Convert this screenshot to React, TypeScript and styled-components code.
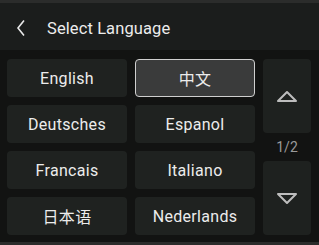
import React, {useState} from "react";
import styled, {createGlobalStyle} from "styled-components";

const GlobalStyle = createGlobalStyle`
  html, body {
    margin: 0;
    padding: 0;
    background: #121312;
  }
  body {
    font-family: Roboto, "Noto Sans CJK SC", "Noto Sans", sans-serif;
  }
`

const Screen = styled.div`
  width: 319px;
  height: 245px;
  display: flex;
  flex-direction: column;
  background: #121312;
  border-top: 3px solid #2b2c2b;
  border-bottom: 3px solid #2b2c2b;
  box-sizing: border-box;
  overflow: hidden;
`

const Header = styled.div`
  height: 47px;
  display: flex;
  align-items: center;
  padding: 3px 0 0 16px;
  background: #1b1d1c;
  color: #ececec;
  box-sizing: border-box;
`

const BackButton = styled.button`
  background: none;
  border: none;
  padding: 0;
  width: 16px;
  height: 20px;
  display: flex;
  align-items: center;
  cursor: pointer;
`

const Title = styled.h1`
  margin: 0 0 0 15px;
  font-size: 16.5px;
  font-weight: 400;
  letter-spacing: 0.1px;
  color: #ececec;
`

const Body = styled.div`
  display: grid;
  grid-template-columns: 120px 120px 48px;
  grid-template-rows: repeat(4, 38px);
  gap: 8px;
  padding: 9px 8px 0 7px;
`

const LangButton = styled.button<{ $selected: boolean }>`
  margin: 0;
  padding: 0;
  border-radius: 4px;
  border: 1px solid ${({$selected}) => $selected ? "#cfcfcf" : "transparent"};
  background: ${({$selected}) => $selected ? "#3a3b3b" : "#1f2220"};
  color: #ececec;
  font-family: Roboto, "Noto Sans CJK SC", sans-serif;
  font-size: 16px;
  letter-spacing: 0.3px;
  cursor: pointer;
`

const Pager = styled.div`
  grid-column: 3;
  grid-row: 1 / span 4;
  display: flex;
  flex-direction: column;
`

const PageButton = styled.button`
  height: 74px;
  margin: 0;
  padding: 0;
  border: none;
  border-radius: 4px;
  background: #1e211f;
  display: flex;
  align-items: center;
  justify-content: center;
  cursor: pointer;
`

const PageLabel = styled.div`
  height: 28px;
  display: flex;
  align-items: center;
  justify-content: center;
  color: #9a9a9a;
  font-size: 14px;
`

const languages = [
    "English", "中文",
    "Deutsches", "Espanol",
    "Francais", "Italiano",
    "日本语", "Nederlands",
];

function Triangle(props: { down?: boolean }) {
    return (
        <svg width="22" height="13" viewBox="0 0 22 13">
            <path
                d={props.down ? "M2 2 L20 2 L11 11 Z" : "M2 11 L20 11 L11 2 Z"}
                fill="none"
                stroke="#bdbdbd"
                strokeWidth="2"
                strokeLinejoin="round"
            />
        </svg>
    );
}

export default function App() {
    const [selected, setSelected] = useState<string>("中文");

    return (
        <Screen>
            <GlobalStyle/>
            <Header>
                <BackButton>
                    <svg width="10" height="18" viewBox="0 0 10 18">
                        <path d="M8 1.5 L2 9 L8 16.5" fill="none" stroke="#e8e8e8" strokeWidth="1.6"/>
                    </svg>
                </BackButton>
                <Title>Select Language</Title>
            </Header>
            <Body>
                {languages.map(lang => (
                    <LangButton
                        key={lang}
                        $selected={lang === selected}
                        onClick={() => setSelected(lang)}
                    >
                        {lang}
                    </LangButton>
                ))}
                <Pager>
                    <PageButton><Triangle/></PageButton>
                    <PageLabel>1/2</PageLabel>
                    <PageButton><Triangle down/></PageButton>
                </Pager>
            </Body>
        </Screen>
    );
}
